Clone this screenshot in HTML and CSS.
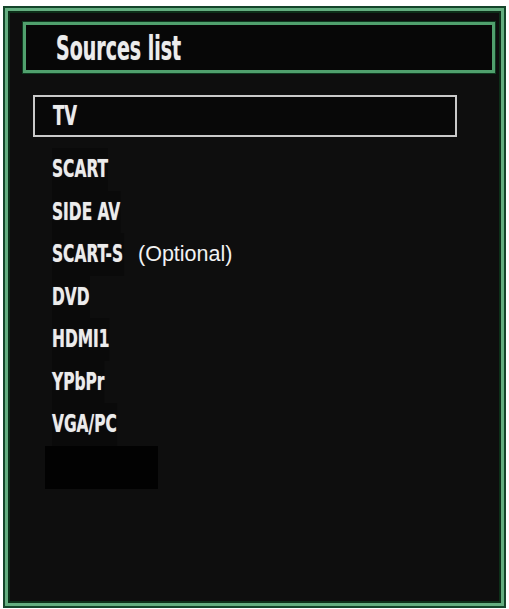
FILE: index.html
```
<!DOCTYPE html>
<html>
<head>
<meta charset="utf-8">
<link rel="stylesheet" href="styles.css">
</head>
<body>
<div class="panel">
  <div class="header"><span class="label header-label">Sources list</span></div>
  <div class="selected"><span class="label tv-label">TV</span></div>
  <ul class="sources">
    <li><span class="label">SCART</span></li>
    <li><span class="label">SIDE AV</span></li>
    <li><span class="label label-s">SCART-S</span><span class="note">(Optional)</span></li>
    <li><span class="label">DVD</span></li>
    <li><span class="label">HDMI1</span></li>
    <li><span class="label">YPbPr</span></li>
    <li><span class="label">VGA/PC</span></li>
  </ul>
  <div class="blank"></div>
</div>
</body>
</html>
```

FILE: styles.css
```
html, body {
  margin: 0;
  padding: 0;
  background: #ffffff;
}

.panel {
  box-sizing: border-box;
  width: 503px;
  height: 602px;
  margin: 6px 0 0 3px;
  border: 2px solid #14452a;
  box-shadow: inset 0 0 0 3px #64ae80, inset 0 0 0 5px #0d2f19;
  background: #0e0e0e;
  overflow: hidden;
}

.label {
  display: inline-block;
  font-family: "DejaVu Sans Condensed", "DejaVu Sans", sans-serif;
  font-stretch: condensed;
  font-weight: bold;
  color: #ececec;
  text-shadow: 0 0 1px rgba(255, 255, 255, 0.5);
  transform-origin: left center;
  transform: scaleX(0.7);
  white-space: nowrap;
}

.header {
  box-sizing: border-box;
  width: 472px;
  height: 51px;
  margin: 14px 0 0 18px;
  border: 3px solid #50a06d;
  box-shadow: 0 0 0 1px #0f3a20;
  background: #070707;
  padding: 2px 0 0 30px;
  line-height: 43px;
}

.header-label {
  font-size: 33px;
  transform: scaleX(0.64);
}

.selected {
  box-sizing: border-box;
  width: 424px;
  height: 42px;
  margin: 22px 0 0 28px;
  border: 2px solid #c9c9c9;
  background: #080808;
  padding-left: 18px;
  line-height: 38px;
}

.tv-label {
  font-size: 27px;
  transform: scaleX(0.68);
}

.sources {
  list-style: none;
  margin: 11px 0 0 0;
  padding: 0 0 0 47px;
}

.sources li {
  display: flex;
  align-items: center;
  height: 42.5px;
  line-height: 42.5px;
}

.sources .label {
  font-size: 24.5px;
  background: #0a0a0a;
}

.label-s {
  width: 103px;
}

.note {
  font-family: "Liberation Sans", Arial, sans-serif;
  font-size: 21.5px;
  color: #f2f2f2;
  margin-left: -17px;
}

.blank {
  width: 113px;
  height: 43px;
  margin: 0 0 0 40px;
  background: #020202;
}
```
